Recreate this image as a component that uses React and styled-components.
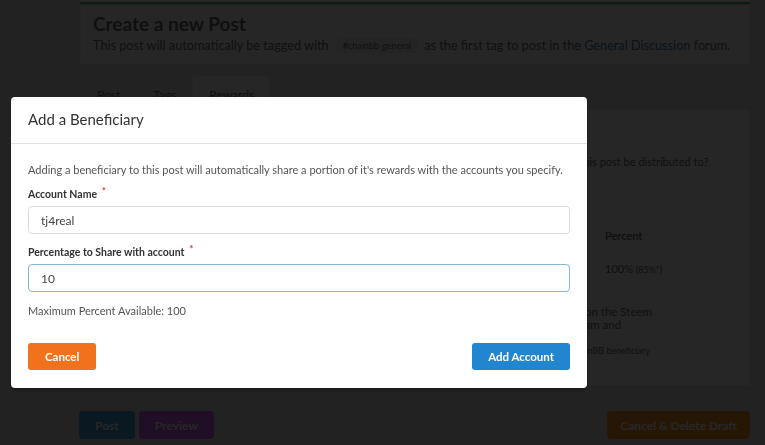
import styled, { createGlobalStyle } from "styled-components";

const GlobalStyle = createGlobalStyle`
  html, body {
    margin: 0;
    padding: 0;
    background: #e3e3e3;
    font-family: Lato, "Open Sans", "Liberation Sans", sans-serif;
    overflow: hidden;
  }
  * { box-sizing: border-box; }
`;

const Page = styled.div`
  width: 765px;
  height: 445px;
  padding: 0 15px 0 80px;
  display: flex;
  flex-direction: column;
  color: #6a6a6a;
`;

const TopBar = styled.div`
  height: 4px;
  border-bottom: 2px solid #5fbf7a;
  background: #fff;
`;

const HeaderSegment = styled.div`
  margin-top: 1px;
  height: 59px;
  background: #fff;
  border: 1px solid #eee;
  padding: 6px 12px;
`;

const PageTitle = styled.h1`
  margin: 0;
  font-size: 19px;
  font-weight: 700;
  line-height: 24px;
`;

const SubTitle = styled.div`
  font-size: 12.7px;
  line-height: 18px;
  white-space: nowrap;
`;

const TagChip = styled.span`
  display: inline-block;
  margin: 0 6px 0 7px;
  padding: 1px 7px;
  font-size: 9px;
  line-height: 13px;
  background: #f2f2f2;
  border-radius: 3px;
  vertical-align: 1px;
`;

const ForumLink = styled.span`
  color: #4a78a8;
`;

const TabBar = styled.div`
  margin-top: 12px;
  height: 33px;
  display: flex;
  align-items: flex-end;
`;

const Tab = styled.div`
  height: 33px;
  padding: 10px 15px 0 16px;
  font-size: 12px;
  background: ${(p) => (p.$active ? "#fff" : "transparent")};
  border: 1px solid ${(p) => (p.$active ? "#eee" : "transparent")};
  border-bottom: none;
  border-radius: 3px 3px 0 0;
`;

const ContentSegment = styled.div`
  height: 277px;
  background: #fff;
  border: 1px solid #eee;
  padding: 21px 16px 18px 20px;
  display: flex;
`;

const InnerSegment = styled.div`
  flex: 1;
  border: 1px solid #eee;
  padding: 22px 14px 10px 19px;
  font-size: 11px;
`;

const Question = styled.p`
  margin: 0;
  line-height: 16px;
  white-space: nowrap;
`;

const ShareTable = styled.table`
  margin-top: 47px;
  border-collapse: collapse;
  font-size: 11px;
  width: 598px;
  background: #fafafa;
`;

const Th = styled.th`
  text-align: left;
  font-weight: 600;
  height: 38px;
  padding: 0 14px;
  border-bottom: 1px solid #eee;
  width: ${(p) => p.$w || "auto"};
`;

const Td = styled.td`
  height: 27px;
  padding: 0 14px;
  span { font-size: 9px; }
`;

const Note = styled.p`
  margin: 23px 0 0;
  line-height: 13px;
  font-size: 11.5px;
  white-space: nowrap;
`;

const SmallNote = styled.p`
  margin: 14px 0 0;
  font-size: 9px;
  white-space: nowrap;
`;

const Actions = styled.div`
  margin-top: 25px;
  display: flex;
  gap: 4px;
  margin-left: -1px;
`;

const PageButton = styled.button`
  height: 28px;
  padding: 0 ${(p) => p.$pad || 16}px;
  border: none;
  border-radius: 4px;
  font-family: inherit;
  font-weight: 700;
  font-size: 12px;
  color: #ffffff;
  background: ${(p) => p.$bg};
  margin-left: ${(p) => (p.$push ? "auto" : "0")};
`;

const Dimmer = styled.div`
  position: fixed;
  inset: 0;
  background: rgba(0, 0, 0, 0.85);
  padding: 97px 0 0 11px;
`;

const Modal = styled.div`
  width: 576px;
  background: #fff;
  border-radius: 4px;
  box-shadow: 1px 3px 3px rgba(0, 0, 0, 0.2);
`;

const ModalHeader = styled.div`
  height: 47px;
  padding: 0 17px 2px;
  display: flex;
  align-items: center;
  font-size: 15px;
  color: #333;
  border-bottom: 1px solid #e2e2e4;
`;

const ModalBody = styled.div`
  padding: 19px 17px 18px;
  color: #555;
  font-size: 11px;
`;

const Intro = styled.p`
  margin: 0 0 11px;
  line-height: 14px;
`;

const Field = styled.div`
  margin-bottom: 12px;
`;

const Label = styled.label`
  display: block;
  font-weight: 700;
  font-size: 10.5px;
  line-height: 13px;
  color: #333;
  margin-bottom: 5px;
`;

const Required = styled.span`
  position: relative;
  top: -4px;
  margin-left: 5px;
  font-size: 9px;
  line-height: 0;
  color: #db2828;
`;

const Input = styled.input`
  display: block;
  width: 100%;
  height: 28px;
  padding: 0 12px;
  font-family: inherit;
  font-size: 12px;
  color: #444;
  border: 1px solid ${(p) => (p.$focus ? "#85b7d9" : "#dcdcdd")};
  border-radius: 4px;
  outline: none;
`;

const Available = styled.p`
  margin: 0;
  line-height: 14px;
`;

const ModalActions = styled.div`
  display: flex;
  justify-content: space-between;
  margin-top: 25px;
`;

const ModalButton = styled.button`
  height: 27px;
  padding: 0 ${(p) => p.$pad}px;
  border: none;
  border-radius: 3px;
  font-family: inherit;
  font-weight: 700;
  font-size: 11.5px;
  color: #fff;
  background: ${(p) => p.$bg};
`;

export default function App() {
  return (
    <>
      <GlobalStyle />
      <Page>
        <TopBar />
        <HeaderSegment>
          <PageTitle>Create a new Post</PageTitle>
          <SubTitle>
            This post will automatically be tagged with
            <TagChip>#chainbb-general</TagChip>
            as the first tag to post in the <ForumLink>General Discussion</ForumLink> forum.
          </SubTitle>
        </HeaderSegment>
        <TabBar>
          <Tab>Post</Tab>
          <Tab>Tags</Tab>
          <Tab $active>Rewards</Tab>
        </TabBar>
        <ContentSegment>
          <InnerSegment>
            <Question>
              Beneficiaries receive a share of the rewards from a post. Who should the rewards generated by this post be distributed to?
            </Question>
            <ShareTable>
              <thead>
                <tr>
                  <Th>Account</Th>
                  <Th $w="128px">Percent</Th>
                </tr>
              </thead>
              <tbody>
                <tr>
                  <Td>@author</Td>
                  <Td>
                    100% <span>(85%*)</span>
                  </Td>
                </tr>
              </tbody>
            </ShareTable>
            <Note>
              * The author receives 85% of all rewards generated by this post, with 15% going to Curators on the Steem
              <br />
              platform. A portion of the author rewards can be shared as a beneficiary with the chainBB Team and
            </Note>
            <SmallNote>
              This platform is supported through these beneficiary rewards, so we kindly ask that you do not remove or alter the chainBB beneficiary
            </SmallNote>
          </InnerSegment>
        </ContentSegment>
        <Actions>
          <PageButton $bg="#43a0e3">Post</PageButton>
          <PageButton $bg="#cf5df7">Preview</PageButton>
          <PageButton $bg="#ff9528" $pad={13} $push>
            Cancel &amp; Delete Draft
          </PageButton>
        </Actions>
      </Page>
      <Dimmer>
        <Modal>
          <ModalHeader>Add a Beneficiary</ModalHeader>
          <ModalBody>
            <Intro>
              Adding a beneficiary to this post will automatically share a portion of it's rewards with the
              accounts you specify.
            </Intro>
            <Field>
              <Label>
                Account Name<Required>*</Required>
              </Label>
              <Input defaultValue="tj4real" />
            </Field>
            <Field>
              <Label>
                Percentage to Share with account<Required>*</Required>
              </Label>
              <Input $focus defaultValue="10" />
            </Field>
            <Available>Maximum Percent Available: 100</Available>
            <ModalActions>
              <ModalButton $bg="#f2711c" $pad={17}>
                Cancel
              </ModalButton>
              <ModalButton $bg="#2185d0" $pad={16}>
                Add Account
              </ModalButton>
            </ModalActions>
          </ModalBody>
        </Modal>
      </Dimmer>
    </>
  );
}
